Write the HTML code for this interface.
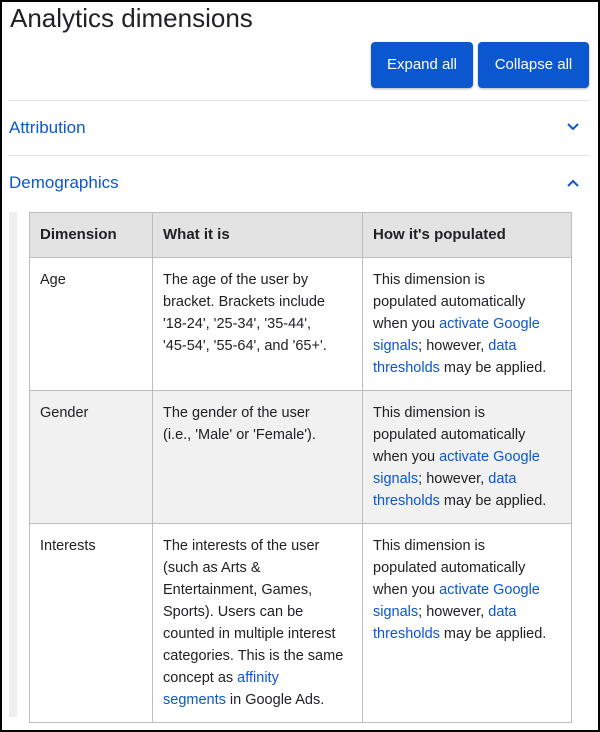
<!DOCTYPE html>
<html><head><style>
html,body{margin:0;padding:0;}
body{width:600px;height:732px;position:relative;overflow:hidden;background:#fff;font-family:"Liberation Sans",Arial,sans-serif;color:#202124;}
.frame{position:absolute;left:0;top:0;width:596px;height:728px;border:2px solid #000;}
.title{position:absolute;left:10px;top:3px;font-size:26px;color:#202124;}
.btn{position:absolute;top:42px;height:46px;background:#0b57d0;color:#fff;font-size:15px;line-height:46px;text-align:center;border-radius:4px;box-shadow:0 1px 2px rgba(0,0,0,.3);}
.hr{position:absolute;left:9px;width:580px;height:1px;background:#e0e0e0;}
.sec{position:absolute;left:9px;font-size:17px;color:#0b57d0;}
.chev{position:absolute;left:566px;}
.bar{position:absolute;left:9px;top:212px;width:8px;height:505px;background:#efefef;}
table{position:absolute;left:29px;top:212px;width:543px;border-collapse:collapse;font-size:14.5px;line-height:22px;}
td,th{border:1px solid #bdbdbd;vertical-align:top;text-align:left;padding:11px 10px;white-space:nowrap;}
th{background:#e3e3e3;font-weight:bold;height:22px;font-size:15px;}
tr.g td{background:#f1f1f1;}
a{color:#0b57d0;text-decoration:none;}
</style></head><body>
<div class="frame"></div>
<div class="title">Analytics dimensions</div>
<div class="btn" style="left:371px;width:102px;">Expand all</div>
<div class="btn" style="left:478px;width:111px;">Collapse all</div>
<div class="hr" style="top:100px"></div>
<div class="sec" style="top:118px">Attribution</div>
<svg class="chev" style="top:122px" width="14" height="10" viewBox="0 0 14 10"><path d="M2 2 L7 7 L12 2" fill="none" stroke="#0b57d0" stroke-width="2"/></svg>
<div class="hr" style="top:155px"></div>
<div class="sec" style="top:173px">Demographics</div>
<svg class="chev" style="top:178px" width="14" height="10" viewBox="0 0 14 10"><path d="M2 8 L7 3 L12 8" fill="none" stroke="#0b57d0" stroke-width="2"/></svg>
<div class="bar"></div>
<table>
<colgroup><col style="width:123px"><col style="width:210px"><col></colgroup>
<tr><th>Dimension</th><th>What it is</th><th>How it's populated</th></tr>
<tr style="height:132px"><td>Age</td><td>The age of the user by<br>bracket. Brackets include<br>'18-24', '25-34', '35-44',<br>'45-54', '55-64', and '65+'.</td><td>This dimension is<br>populated automatically<br>when you <a>activate Google</a><br><a>signals</a>; however, <a>data</a><br><a>thresholds</a> may be applied.</td></tr>
<tr class="g" style="height:133px"><td>Gender</td><td>The gender of the user<br>(i.e., 'Male' or 'Female').</td><td>This dimension is<br>populated automatically<br>when you <a>activate Google</a><br><a>signals</a>; however, <a>data</a><br><a>thresholds</a> may be applied.</td></tr>
<tr style="height:199px"><td>Interests</td><td>The interests of the user<br>(such as Arts &amp;<br>Entertainment, Games,<br>Sports). Users can be<br>counted in multiple interest<br>categories. This is the same<br>concept as <a>affinity</a><br><a>segments</a> in Google Ads.</td><td>This dimension is<br>populated automatically<br>when you <a>activate Google</a><br><a>signals</a>; however, <a>data</a><br><a>thresholds</a> may be applied.</td></tr>
</table>
</body></html>
